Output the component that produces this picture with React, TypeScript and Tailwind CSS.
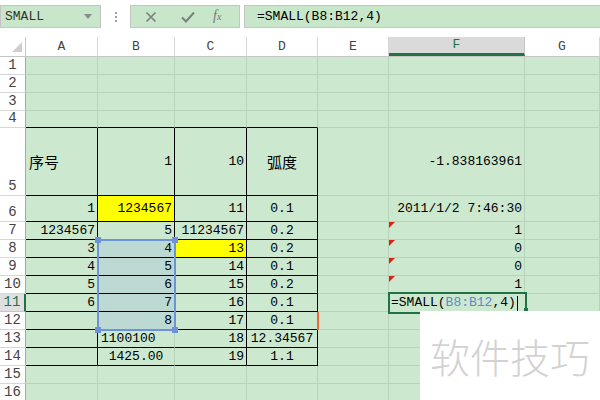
import React from "react";

type Cell = {
  v?: string;
  a?: "l" | "r" | "c";
  bg?: "yellow" | "sel";
  tri?: boolean;
};

const widths = ["w-[72px]", "w-[77px]", "w-[72px]", "w-[71px]", "w-[71px]", "w-[136px]", "w-[75px]"];
const letters = ["A", "B", "C", "D", "E", "F", "G"];

// rows 1..16, cells A..G
const rows: { h: string; cells: Cell[] }[] = [
  { h: "h-[18px]", cells: [] },
  { h: "h-[18px]", cells: [] },
  { h: "h-[18px]", cells: [] },
  { h: "h-[17px]", cells: [] },
  {
    h: "h-[68px]",
    cells: [{ v: "序号", a: "l" }, { v: "1", a: "r" }, { v: "10", a: "r" }, { v: "弧度", a: "c" }, {}, { v: "-1.838163961", a: "r" }],
  },
  {
    h: "h-[26px]",
    cells: [{ v: "1", a: "r" }, { v: "1234567", a: "r", bg: "yellow" }, { v: "11", a: "r" }, { v: "0.1", a: "c" }, {}, { v: "2011/1/2 7:46:30", a: "r" }],
  },
  {
    h: "h-[18px]",
    cells: [{ v: "1234567", a: "r" }, { v: "5", a: "r" }, { v: "11234567", a: "r" }, { v: "0.2", a: "c" }, {}, { v: "1", a: "r", tri: true }],
  },
  {
    h: "h-[18px]",
    cells: [{ v: "3", a: "r" }, { v: "4", a: "r", bg: "sel" }, { v: "13", a: "r", bg: "yellow" }, { v: "0.2", a: "c" }, {}, { v: "0", a: "r", tri: true }],
  },
  {
    h: "h-[18px]",
    cells: [{ v: "4", a: "r" }, { v: "5", a: "r", bg: "sel" }, { v: "14", a: "r" }, { v: "0.1", a: "c" }, {}, { v: "0", a: "r", tri: true }],
  },
  {
    h: "h-[18px]",
    cells: [{ v: "5", a: "r" }, { v: "6", a: "r", bg: "sel" }, { v: "15", a: "r" }, { v: "0.2", a: "c" }, {}, { v: "1", a: "r", tri: true }],
  },
  {
    h: "h-[18px]",
    cells: [{ v: "6", a: "r" }, { v: "7", a: "r", bg: "sel" }, { v: "16", a: "r" }, { v: "0.1", a: "c" }],
  },
  {
    h: "h-[18px]",
    cells: [{}, { v: "8", a: "r", bg: "sel" }, { v: "17", a: "r" }, { v: "0.1", a: "c" }],
  },
  {
    h: "h-[18px]",
    cells: [{}, { v: "1100100", a: "l" }, { v: "18", a: "r" }, { v: "12.34567", a: "c" }],
  },
  {
    h: "h-[18px]",
    cells: [{}, { v: "1425.00", a: "c" }, { v: "19", a: "r" }, { v: "1.1", a: "c" }],
  },
  { h: "h-[18px]", cells: [] },
  { h: "h-[18px]", cells: [] },
];

function GridCell({ cell, row, col }: { cell: Cell; row: number; col: number }) {
  const inTable = row >= 5 && row <= 14 && col <= 3;
  const noRight = col === 1 && row >= 13;
  const right = inTable && !noRight ? "border-r-black" : "border-r-[#b7d3ba]";
  const bottom = inTable || (row === 4 && col <= 3) ? "border-b-black" : "border-b-[#b7d3ba]";
  const bg = cell.bg === "yellow" ? "bg-[#ffff00]" : cell.bg === "sel" ? "bg-[#bcdad3]" : "bg-[#cce8cf]";
  const align = cell.a === "l" ? "justify-start pl-[3px]" : cell.a === "c" ? "justify-center" : "justify-end pr-[2px]";
  const cjk = cell.v && /[\u4e00-\u9fff]/.test(cell.v);
  return (
    <div className={`relative flex shrink-0 items-center border-r border-b ${widths[col]} ${right} ${bottom} ${bg} ${align}`}>
      {cell.tri && (
        <span className="absolute left-0 top-0 h-0 w-0 border-t-[6px] border-r-[6px] border-t-[#e02010] border-r-transparent" />
      )}
      <span className={cjk ? "font-['Noto_Sans_CJK_SC',sans-serif] text-[15px]" : ""}>{cell.v}</span>
    </div>
  );
}

export default function App() {
  return (
    <div className="relative h-[400px] w-[600px] overflow-hidden bg-white font-['Liberation_Mono','Noto_Sans_CJK_SC',monospace] text-[13px] leading-[16px] text-black">
      {/* formula bar */}
      <div className="flex h-[37px] items-start pt-[5px]">
        <div className="flex h-[23px] w-[101px] shrink-0 items-center justify-between border border-[#c4c4c4] bg-[#c8e6c9] pl-[4px] pr-[8px] text-[#333]">
          <span>SMALL</span>
          <svg width="8" height="5" viewBox="0 0 8 5">
            <path d="M0 0h8L4 5z" fill="#8a8a8a" />
          </svg>
        </div>
        <div className="flex h-[23px] w-[29px] shrink-0 flex-col items-center justify-center gap-[2px]">
          <span className="h-[2px] w-[2px] bg-[#a0a0a0]" />
          <span className="h-[2px] w-[2px] bg-[#a0a0a0]" />
          <span className="h-[2px] w-[2px] bg-[#a0a0a0]" />
        </div>
        <div className="flex h-[23px] w-[110px] shrink-0 items-center border border-[#c4c4c4] bg-[#c8e6c9]">
          <svg className="ml-[14px]" width="12" height="12" viewBox="0 0 12 12">
            <path d="M1.5 1.5l9 9M10.5 1.5l-9 9" stroke="#7d7d7d" strokeWidth="1.6" />
          </svg>
          <svg className="ml-[24px]" width="14" height="12" viewBox="0 0 14 12">
            <path d="M1 6.5l4 4L13 1.5" stroke="#7d7d7d" strokeWidth="2" fill="none" />
          </svg>
          <span className="ml-[18px] font-['Liberation_Serif',serif] text-[14px] italic text-[#777]">
            f<span className="text-[10px]">x</span>
          </span>
        </div>
        <div className="ml-[4px] flex h-[23px] flex-1 items-center border border-r-0 border-[#c4c4c4] bg-[#c8e6c9] pl-[12px]">
          =SMALL(B8:B12,4)
        </div>
      </div>

      {/* column headers */}
      <div className="flex h-[20px] border-b border-[#c6c6c6] text-[#444]">
        <div className="relative w-[26px] shrink-0 border-r border-[#c6c6c6]">
          <span className="absolute right-[3px] bottom-[4px] h-0 w-0 border-b-[10px] border-l-[10px] border-b-[#cfcfcf] border-l-transparent" />
        </div>
        {letters.map((l, i) =>
          l === "F" ? (
            <div key={l} className={`flex shrink-0 items-end justify-center border-r border-b-[3px] border-r-[#c6c6c6] border-b-[#217346] bg-[#dadada] text-[#217346] ${widths[i]}`}>
              {l}
            </div>
          ) : (
            <div key={l} className={`flex shrink-0 items-end justify-center border-r border-[#d6d6d6] pb-[1px] ${widths[i]}`}>
              {l}
            </div>
          )
        )}
      </div>

      {/* rows */}
      {rows.map((r, ri) => {
        const n = ri + 1;
        return (
          <div key={n} className={`flex ${r.h}`}>
            {n === 11 ? (
              <div className="flex w-[26px] shrink-0 items-end justify-center border-r-2 border-b border-r-[#217346] border-b-[#c6c6c6] bg-[#e0e0e0] pb-[1px] text-[14px] text-[#217346]">
                {n}
              </div>
            ) : (
              <div className="flex w-[26px] shrink-0 items-end justify-center border-r border-b border-r-[#a8a8a8] border-b-[#d6d6d6] pb-[1px] text-[14px] text-[#444]">
                {n}
              </div>
            )}
            {letters.map((_, ci) => (
              <GridCell key={ci} cell={r.cells[ci] || {}} row={n} col={ci} />
            ))}
          </div>
        );
      })}

      {/* selection B8:B12 */}
      <div className="absolute left-[97px] top-[239px] h-[92px] w-[79px] border-2 border-[#6b93d6]" />
      <span className="absolute left-[95px] top-[237px] h-[6px] w-[6px] bg-[#6b93d6]" />
      <span className="absolute left-[172px] top-[237px] h-[6px] w-[6px] bg-[#6b93d6]" />
      <span className="absolute left-[95px] top-[327px] h-[6px] w-[6px] bg-[#6b93d6]" />
      <span className="absolute left-[172px] top-[327px] h-[6px] w-[6px] bg-[#6b93d6]" />

      {/* red mark on D12 */}
      <span className="absolute left-[317px] top-[312px] h-[18px] w-[2px] bg-[#ee6a3a]" />

      {/* F11 in edit mode */}
      <div className="absolute left-[388px] top-[292px] flex h-[22px] w-[139px] items-center border-2 border-[#217346] bg-[#cce8cf] pl-[1px]">
        <span>=SMALL(</span>
        <span className="text-[#5b8ad0]">B8:B12</span>
        <span>,4)</span>
        <span className="ml-[1px] h-[15px] w-[1px] bg-black" />
      </div>
      <span className="absolute left-[524px] top-[308px] h-[6px] w-[4px] bg-[#217346]" />

      {/* watermark */}
      <div className="absolute left-[420px] top-[311px] flex h-[89px] w-[180px] items-center justify-center bg-white font-['Noto_Sans_CJK_SC',sans-serif] text-[40px] font-light leading-none text-[#d2d2d2]">
        软件技巧
      </div>
    </div>
  );
}
